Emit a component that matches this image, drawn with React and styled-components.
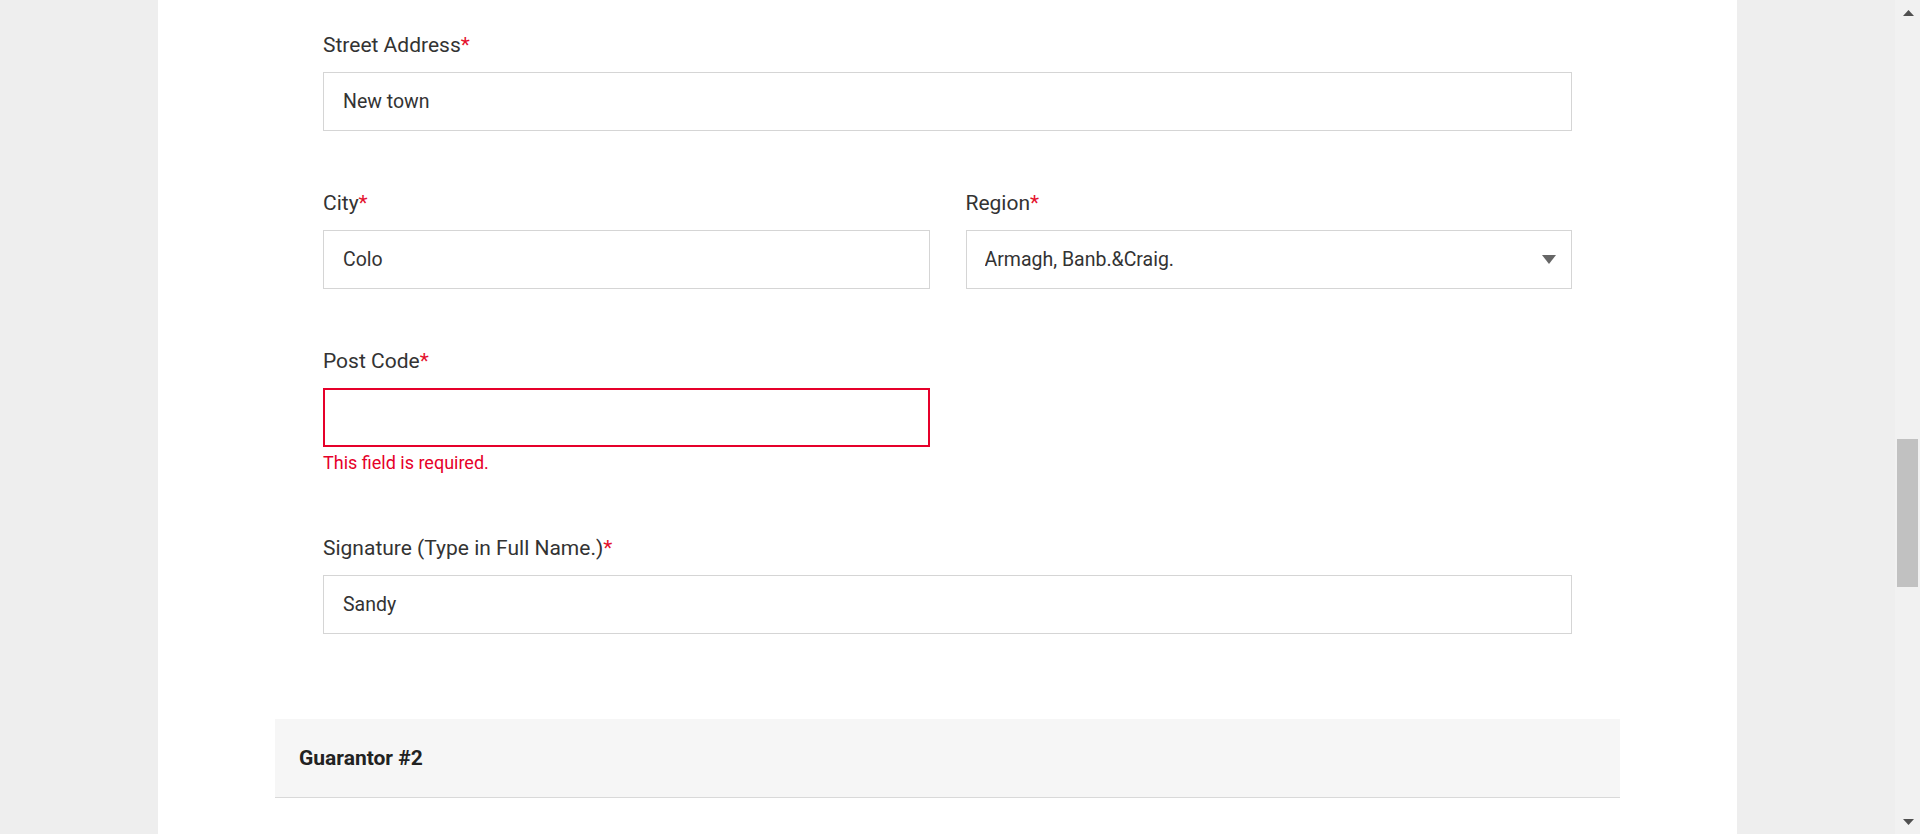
import React from 'react';
import styled, { createGlobalStyle } from 'styled-components';

const GlobalStyle = createGlobalStyle`
  html, body {
    margin: 0;
    padding: 0;
    height: 834px;
    overflow: hidden;
  }
  body {
    font-family: Roboto, "Liberation Sans", Arial, sans-serif;
    color: #333;
  }
`;

const Screen = styled.div`
  display: flex;
  height: 834px;
`;

const Page = styled.main`
  flex: 1;
  background: #eeeeee;
  display: flex;
  justify-content: center;
`;

const Panel = styled.div`
  width: 1579px;
  background: #ffffff;
  padding: 0 117px;
  box-sizing: border-box;
`;

const Fields = styled.div`
  padding: 33px 48px 85px;
  display: flex;
  flex-direction: column;
  gap: 60px;
`;

const Row = styled.div`
  display: grid;
  grid-template-columns: 1fr 1fr;
  column-gap: 36px;
`;

const Field = styled.div`
  display: flex;
  flex-direction: column;
`;

const Label = styled.label`
  font-size: 21px;
  line-height: 25px;
  margin-bottom: 14px;
  color: #333;
`;

const Req = styled.span`
  color: #e4122e;
`;

const TextInput = styled.input`
  box-sizing: border-box;
  width: 100%;
  height: 59px;
  margin: 0;
  padding: 0 19px;
  border: ${(p) => (p.$invalid ? '2px solid #e6002a' : '1px solid #d5d5d5')};
  border-radius: 0;
  background: #fff;
  font-family: Roboto, "Liberation Sans", Arial, sans-serif;
  font-size: 19.5px;
  color: #333;
  outline: none;
`;

const SelectWrap = styled.div`
  position: relative;
`;

const Select = styled.select`
  box-sizing: border-box;
  width: 100%;
  height: 59px;
  margin: 0;
  padding: 0 50px 0 18px;
  border: 1px solid #d5d5d5;
  border-radius: 0;
  background: #fff;
  appearance: none;
  -webkit-appearance: none;
  font-family: Roboto, "Liberation Sans", Arial, sans-serif;
  font-size: 19.5px;
  color: #333;
  outline: none;
`;

const Caret = styled.svg`
  position: absolute;
  right: 16px;
  top: 25px;
  pointer-events: none;
`;

const ErrorText = styled.div`
  margin: 5px 0 2px;
  font-size: 18px;
  line-height: 22px;
  color: #e6002a;
`;

const SectionBar = styled.div`
  height: 78px;
  display: flex;
  align-items: center;
  padding: 0 24px;
  background: #f6f6f6;
  border-bottom: 1px solid #d9d9d9;
  font-size: 21px;
  font-weight: 700;
  color: #222;
`;

const Scrollbar = styled.div`
  width: 25px;
  background: #f1f1f1;
  display: flex;
  flex-direction: column;
`;

const ScrollButton = styled.div`
  height: 25px;
  display: flex;
  align-items: center;
  justify-content: center;
  padding-left: 1px;
`;

const Track = styled.div`
  flex: 1;
  padding: 0 2px;
`;

const Thumb = styled.div`
  height: 148px;
  background: #c1c1c1;
`;

const App = () => {
  // scroll position of the page, as shown in the screenshot
  let thumbTop = 439;

  return (
    <Screen>
      <GlobalStyle />
      <Page>
        <Panel>
          <Fields>
            <Field>
              <Label>Street Address<Req>*</Req></Label>
              <TextInput readOnly value="New town" />
            </Field>
            <Row>
              <Field>
                <Label>City<Req>*</Req></Label>
                <TextInput readOnly value="Colo" />
              </Field>
              <Field>
                <Label>Region<Req>*</Req></Label>
                <SelectWrap>
                  <Select value="armagh" onChange={() => {}}>
                    <option value="armagh">Armagh, Banb.&amp;Craig.</option>
                  </Select>
                  <Caret width="14" height="9" viewBox="0 0 14 9">
                    <path d="M0 0 H14 L7 9 Z" fill="#666" />
                  </Caret>
                </SelectWrap>
              </Field>
            </Row>
            <Row>
              <Field>
                <Label>Post Code<Req>*</Req></Label>
                <TextInput readOnly value="" $invalid />
                <ErrorText>This field is required.</ErrorText>
              </Field>
            </Row>
            <Field>
              <Label>Signature (Type in Full Name.)<Req>*</Req></Label>
              <TextInput readOnly value="Sandy" />
            </Field>
          </Fields>
          <SectionBar>Guarantor #2</SectionBar>
        </Panel>
      </Page>
      <Scrollbar>
        <ScrollButton>
          <svg width="11" height="6" viewBox="0 0 11 6">
            <path d="M0 6 L5.5 0 L11 6 Z" fill="#505050" />
          </svg>
        </ScrollButton>
        <Track>
          <Thumb style={{ marginTop: thumbTop - 25 }} />
        </Track>
        <ScrollButton>
          <svg width="11" height="6" viewBox="0 0 11 6">
            <path d="M0 0 H11 L5.5 6 Z" fill="#505050" />
          </svg>
        </ScrollButton>
      </Scrollbar>
    </Screen>
  );
};

export default App;
